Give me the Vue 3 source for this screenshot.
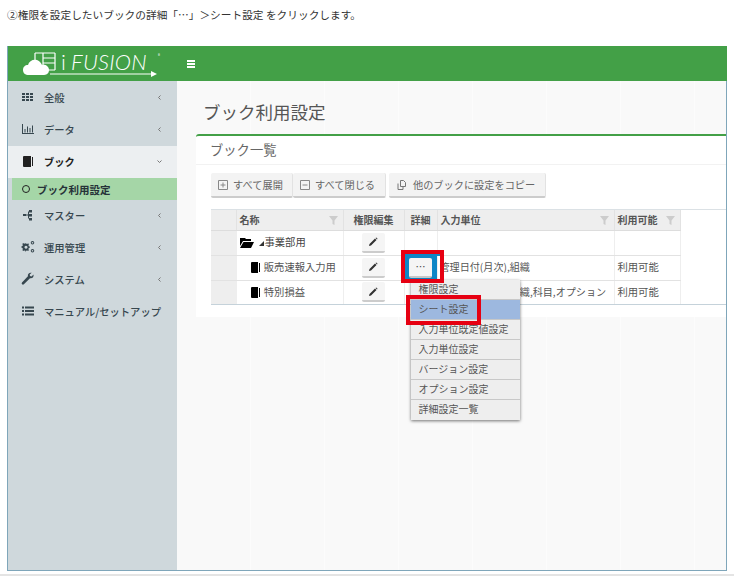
<template>
  <div class="page">
    <p class="intro">②権限を設定したいブックの詳細「…」＞シート設定 をクリックします。</p>

    <div class="frame">
      <header class="topbar">
        <div class="logo">
          <svg class="logo-mark" width="34" height="26" viewBox="0 0 34 26">
            <path d="M12 2h20M12 2v8M20 2v17M32 2v17M20 7h12M20 12h12M20 19h12" fill="none" stroke="#fff" stroke-width="1.200" />
            <path d="M6 24c-4 0-6-2-6-5s2-5 5-5c1-4 5-6 9-5 3 1 4 3 5 5 3-1 7 1 7 5s-3 5-6 5z" fill="#fff" />
          </svg>
          <span class="logo-text"><i class="logo-i">i</i>FUSION</span>
          <sup class="logo-r">®</sup>
          <svg class="logo-arrow" width="107" height="6" viewBox="0 0 107 6">
            <path d="M0 3h102" stroke="#fff" stroke-width="1" />
            <path d="M101 0l6 3-6 3z" fill="#fff" />
          </svg>
        </div>
        <span class="burger"><i></i><i></i><i></i></span>
      </header>

      <div class="body">
        <aside class="sidebar">
          <template v-for="item in menu" :key="item.label">
            <div class="nav" :class="{ open: item.open }">
              <svg class="nav-icon" width="14" height="14" viewBox="0 0 14 14" fill="currentColor">
                <path :d="item.icon" />
              </svg>
              <span class="nav-label">{{ item.label }}</span>
              <svg v-if="item.arrow" class="nav-arrow" width="7" height="7" viewBox="0 0 7 7" fill="none" stroke="#777" stroke-width="1">
                <path :d="item.open ? 'M1.500 2.500 3.500 4.500 5.500 2.500' : 'M4.500 1.500 2.500 3.500 4.500 5.500'" />
              </svg>
            </div>
            <div v-if="item.open" class="subnav">
              <span class="ring"></span>ブック利用設定
            </div>
          </template>
        </aside>

        <main class="main">
          <h1 class="title">ブック利用設定</h1>

          <section class="panel">
            <h2 class="panel-title">ブック一覧</h2>

            <div class="toolbar">
              <div class="btn-group">
                <button class="tool-btn">
                  <svg width="10" height="10" viewBox="0 0 10 10" fill="none" stroke="#888"><path d="M.5.5h9v9h-9zM2.500 5h5M5 2.500v5" /></svg>
                  すべて展開
                </button>
                <button class="tool-btn">
                  <svg width="10" height="10" viewBox="0 0 10 10" fill="none" stroke="#888"><path d="M.5.5h9v9h-9zM2.500 5h5" /></svg>
                  すべて閉じる
                </button>
              </div>
              <button class="tool-btn copy">
                <svg width="12" height="12" viewBox="0 0 12 12" fill="none" stroke="#777"><path d="M4.500 1.500h3l2 2v4h-5zM2 4.500v6h5V8" /></svg>
                他のブックに設定をコピー
              </button>
            </div>

            <div class="grid-wrap">
              <table class="grid">
                <colgroup>
                  <col style="width: 25px" />
                  <col style="width: 107px" />
                  <col style="width: 61px" />
                  <col style="width: 33px" />
                  <col style="width: 177px" />
                  <col style="width: 66px" />
                </colgroup>
                <thead>
                  <tr>
                    <th class="gutter"></th>
                    <th>名称<svg class="funnel" width="9" height="9" viewBox="0 0 9 9"><path d="M0 0h9L5.500 4.500V9L3.500 8V4.500z" /></svg></th>
                    <th class="center">権限編集</th>
                    <th class="center">詳細</th>
                    <th>入力単位<svg class="funnel" width="9" height="9" viewBox="0 0 9 9"><path d="M0 0h9L5.500 4.500V9L3.500 8V4.500z" /></svg></th>
                    <th>利用可能<svg class="funnel" width="9" height="9" viewBox="0 0 9 9"><path d="M0 0h9L5.500 4.500V9L3.500 8V4.500z" /></svg></th>
                  </tr>
                </thead>
                <tbody>
                  <tr>
                    <td class="gutter"></td>
                    <td class="folder-cell">
                      <svg width="14" height="11" viewBox="0 0 14 11"><path d="M0 1h5l1 1h5v2H3L0 9zM3.500 5H14l-3 6H0z" /></svg>
                      <span class="caret"></span>事業部用
                    </td>
                    <td class="center"><button class="edit-btn"><svg width="9" height="9" viewBox="0 0 9 9"><path d="M0 9l.5-2L6 1.500 7.500 3 2 8.500zM6.600 1 7.200.4 8.600 1.800 8 2.400z" /></svg></button></td>
                    <td></td>
                    <td></td>
                    <td></td>
                  </tr>
                  <tr v-for="row in rows" :key="row.name">
                    <td class="gutter"></td>
                    <td class="book-cell">
                      <svg width="9" height="11" viewBox="0 0 9 11"><path d="M0 1q0-1 1-1h6v11H1q-1 0-1-1zM8 1h1v9H8z" /></svg>
                      {{ row.name }}
                    </td>
                    <td class="center"><button class="edit-btn"><svg width="9" height="9" viewBox="0 0 9 9"><path d="M0 9l.5-2L6 1.500 7.500 3 2 8.500zM6.600 1 7.200.4 8.600 1.800 8 2.400z" /></svg></button></td>
                    <td class="detail-cell" :class="{ active: row.active }">
                      <template v-if="row.active">
                        <button class="more-btn">…</button>
                        <span class="mark mark-btn"></span>
                        <div class="dropdown">
                          <div v-for="m in dropdown" :key="m" class="drop-item" :class="{ hot: m === 'シート設定' }">{{ m }}</div>
                          <span class="mark mark-item"></span>
                        </div>
                      </template>
                    </td>
                    <td class="unit">{{ row.unit }}</td>
                    <td class="status">{{ row.status }}</td>
                  </tr>
                </tbody>
              </table>
            </div>
          </section>
        </main>
      </div>
    </div>
  </div>
</template>

<script setup>
const menu = [
  { label: '全般', arrow: true, icon: 'M1 3h3v2H1zM5 3h3v2H5zM9 3h3v2H9zM1 6h3v2H1zM5 6h3v2H5zM9 6h3v2H9zM1 9h3v2H1zM5 9h3v2H5zM9 9h3v2H9z' },
  { label: 'データ', arrow: true, icon: 'M1 2h1v9h11v1H1zM3.500 7h1v3.500h-1zM6 4.500h1v6H6zM8.500 6h1v4.500h-1zM11 3.500h1v7h-1z' },
  { label: 'ブック', arrow: true, open: true, icon: 'M2 3q0-1 1-1h7v11H3q-1 0-1-1zM11 3h1v9h-1z' },
  { label: 'マスター', arrow: true, icon: 'M2 6h3v2H2zM5 6.500h3v1H5zM7 3.500h1v7H7zM8 2h3v2.500H8zM8 6h3v2.500H8zM8 10h3v2.500H8z' },
  { label: '運用管理', arrow: true, icon: 'M5 3.500l1.200.4.900-.6.900.9-.6.900.4 1.200 1 .2v1.300l-1 .2-.4 1.200.6.900-.9.900-.9-.6-1.200.4-.2 1H4.500l-.2-1-1.200-.4-.9.6-.9-.9.6-.9-.4-1.200-1-.2V6.300l1-.2.4-1.200-.6-.9.9-.9.9.6 1.200-.4zm0 2.300a1.500 1.500 0 1 0 .01 0zM11.500 1a1.700 1.700 0 1 1-.01 0zm0 1a.7.7 0 1 0 .01 0zM11.500 9a1.700 1.700 0 1 1-.01 0zm0 1a.7.7 0 1 0 .01 0z' },
  { label: 'システム', arrow: true, icon: 'M12.500 2.500 10.500 4.500 9 4 8.700 2.600 10.700.8C8.500.2 6.500 1.800 6.900 4.200L1 10.500q-.8 1 .1 1.800t1.800 0L9 6.200c2.500.5 4-1.500 3.500-3.700z' },
  { label: 'マニュアル/セットアップ', icon: 'M1 2.500h2v2H1zM4 2.500h9v2H4zM1 6h2v2H1zM4 6h9v2H4zM1 9.500h2v2H1zM4 9.500h9v2H4z' }
];

const rows = [
  { name: '販売速報入力用', unit: '管理日付(月次),組織', status: '利用可能', active: true },
  { name: '特別損益', unit: '管理日付(月次),組織,科目,オプション', status: '利用可能' }
];

const dropdown = ['権限設定', 'シート設定', '入力単位既定値設定', '入力単位設定', 'バージョン設定', 'オプション設定', '詳細設定一覧'];
</script>

<style scoped>
.page {
  height: 576px;
  box-sizing: border-box;
  padding: 8px 7px 0;
  overflow: hidden;
  border-bottom: 2px solid #e4e4e4;
  font-family: "Noto Sans CJK JP", "Liberation Sans", sans-serif;
  color: #444;
}

.intro {
  margin: 0 0 25px;
  font-size: 10.700px;
  line-height: 13px;
  color: #333;
  white-space: nowrap;
}

.frame {
  width: 720px;
  height: 525px;
  box-sizing: border-box;
  border: 1px solid #7fa6ba;
  border-top: 0;
  display: flex;
  flex-direction: column;
}

.topbar {
  height: 35px;
  flex: none;
  margin-right: -1px;
  background: #43a047;
  display: flex;
  align-items: center;
}

.logo {
  position: relative;
  width: 160px;
  height: 35px;
  margin-left: 15px;
  color: #fff;
}

.logo-mark {
  position: absolute;
  left: 0;
  top: 5px;
}

.logo-text {
  position: absolute;
  left: 38px;
  top: 3px;
  font-family: Lato, "Liberation Sans", sans-serif;
  font-weight: 300;
  font-style: italic;
  font-size: 22px;
  line-height: 26px;
  letter-spacing: .2px;
}

.logo-i {
  font-style: normal;
  margin-right: 5px;
}

.logo-r {
  position: absolute;
  left: 135px;
  top: 7px;
  margin: 0;
  font-size: 4px;
  line-height: 5px;
}

.logo-arrow {
  position: absolute;
  left: 27px;
  top: 25px;
}

.burger {
  margin-left: 4px;
  width: 8px;
  display: flex;
  flex-direction: column;
  gap: 1px;
}

.burger i {
  height: 2px;
  background: #fff;
}

.body {
  flex: 1;
  min-height: 0;
  display: flex;
}

.sidebar {
  width: 169px;
  flex: none;
  padding-top: 1px;
  background: #cfd8dc;
}

.nav {
  height: 32px;
  box-sizing: border-box;
  display: flex;
  align-items: center;
  padding: 0 14px 2px 13px;
  font-size: 10.300px;
  font-weight: 500;
  color: #37474f;
}

.nav.open {
  background: #eceff1;
  font-weight: 700;
  color: #212121;
}

.nav-icon {
  flex: none;
  margin-right: 9px;
}

.nav-label {
  flex: 1;
  white-space: nowrap;
}

.nav-arrow {
  flex: none;
}

.subnav {
  height: 22px;
  margin-left: 4px;
  padding-left: 10px;
  display: flex;
  align-items: center;
  background: #a5d6a7;
  font-size: 10.500px;
  font-weight: 700;
  color: #263238;
}

.ring {
  width: 8px;
  height: 8px;
  box-sizing: border-box;
  border: 1.500px solid #222;
  border-radius: 50%;
  margin-right: 7px;
}

.main {
  flex: 1;
  min-width: 0;
  padding-left: 19px;
  background-color: #f9f9f9;
  background-image: repeating-linear-gradient(90deg, transparent 0 73px, #fcfcfc 73px 74px);
}

.title {
  margin: 0;
  height: 53px;
  padding-top: 20px;
  padding-left: 7px;
  box-sizing: border-box;
  font-size: 17.500px;
  line-height: 22px;
  font-weight: 400;
  color: #555;
}

.panel {
  background: #fff;
  border-top: 2px solid #43a047;
  border-top-left-radius: 3px;
  padding-bottom: 12px;
}

.panel-title {
  margin: 0;
  height: 29px;
  padding-left: 14px;
  border-bottom: 1px solid #f2f2f2;
  box-sizing: border-box;
  font-size: 13.300px;
  line-height: 28px;
  font-weight: 400;
  color: #666;
}

.toolbar {
  margin: 8px 0 11px 15px;
  display: flex;
  gap: 3px;
}

.btn-group {
  display: flex;
}

.tool-btn {
  height: 25px;
  padding: 0 7px;
  border: 0;
  border-right: 1px solid #e2e2e2;
  border-bottom: 2px solid #ccc;
  border-radius: 2px;
  background: #f3f3f3;
  font: inherit;
  font-size: 10.200px;
  color: #666;
  display: flex;
  align-items: center;
  gap: 5px;
  white-space: nowrap;
}

.btn-group .tool-btn:first-child {
  width: 82px;
}

.btn-group .tool-btn:last-child {
  width: 93px;
}

.copy {
  width: 157px;
}

.grid-wrap {
  margin-left: 15px;
  border-top: 1px solid #dbe1e5;
  border-bottom: 1px solid #c5d2da;
}

.grid {
  width: 469px;
  table-layout: fixed;
  border-collapse: collapse;
  font-size: 10.300px;
  color: #555;
}

.grid th {
  height: 18px;
  padding: 0 3px 2px;
  background: #eee;
  border-right: 1px solid #e2e2e2;
  border-bottom: 1px solid #ddd;
  text-align: left;
  font-size: 10px;
  font-weight: 700;
  position: relative;
  color: #555;
}

.grid th.center {
  text-align: center;
  padding: 0 0 2px;
}

.grid td.center {
  text-align: center;
  padding: 0 0 1px;
}

.funnel {
  position: absolute;
  right: 5px;
  top: 6px;
  fill: #ccc;
}

.grid td {
  height: 21px;
  padding: 0 3px 3px;
  border-right: 1px solid #eee;
  border-bottom: 1px solid #e2e2e2;
  white-space: nowrap;
}

.grid tr:last-child td {
  height: 20px;
  border-bottom: 0;
}

.grid .gutter {
  background: #eee;
  padding: 0;
}

.grid td.unit {
  padding-left: 2px;
  font-size: 10.100px;
}

.folder-cell {
  color: #444;
}

.folder-cell svg {
  vertical-align: -2px;
}

.caret {
  display: inline-block;
  width: 0;
  height: 0;
  margin: 0 1px 0 5px;
  border-left: 5px solid transparent;
  border-bottom: 5px solid #333;
}

.grid td.book-cell {
  padding-left: 14px;
}

.book-cell svg {
  margin-right: 2px;
  vertical-align: -2px;
}

.edit-btn {
  width: 23px;
  height: 20px;
  padding: 0;
  border: 0;
  border-bottom: 2px solid #ccc;
  border-radius: 2px;
  background: #f5f5f5;
  vertical-align: middle;
}

.edit-btn svg {
  fill: #333;
}

.grid td.detail-cell {
  padding: 0;
  position: relative;
}

.grid td.detail-cell.active {
  background: #0d86c6;
  text-align: center;
}

.more-btn {
  width: 23px;
  height: 20px;
  padding: 0;
  border: 0;
  border-bottom: 2px solid #c8c8c8;
  border-radius: 2px;
  background: #f5f5f5;
  font: inherit;
  font-size: 10px;
  line-height: 14px;
  color: #444;
  display: block;
  margin: 0 auto;
}

.mark {
  position: absolute;
  box-sizing: border-box;
  border: 4px solid #e60012;
  pointer-events: none;
}

.mark-btn {
  left: -4px;
  top: -6px;
  width: 43px;
  height: 33px;
  z-index: 3;
  box-shadow: inset 0 2px 0 #0d86c6;
}

.mark-item {
  left: -5px;
  top: 15px;
  width: 75px;
  height: 30px;
}

.dropdown {
  position: absolute;
  z-index: 2;
  left: 6px;
  top: 24px;
  width: 109px;
  background: #eee;
  box-shadow: 0 1px 3px rgba(0, 0, 0, .55);
  text-align: left;
  color: #555;
}

.drop-item {
  height: 20px;
  box-sizing: border-box;
  padding-left: 8px;
  border-bottom: 1px solid #c8c8c8;
  font-size: 10px;
  line-height: 17px;
}

.drop-item:nth-last-child(2) {
  border-bottom: 0;
}

.drop-item.hot {
  background: #9db8df;
}
</style>

<style>
html, body {
  margin: 0;
  background: #fff;
}
</style>
